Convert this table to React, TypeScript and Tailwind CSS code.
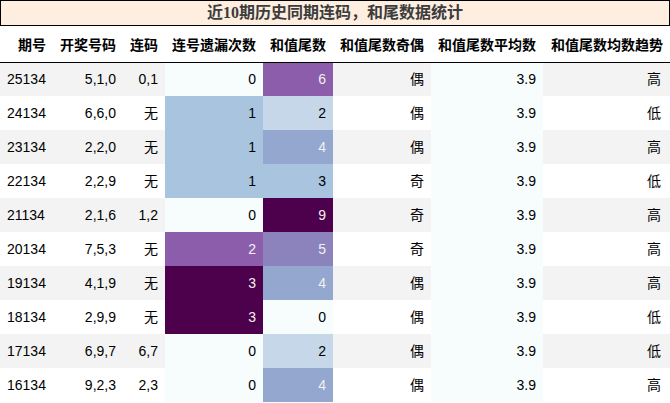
const HEAD = ["期号", "开奖号码", "连码", "连号遗漏次数", "和值尾数", "和值尾数奇偶", "和值尾数平均数", "和值尾数均数趋势"];
const WIDTHS = ["w-[53px]", "w-[70px]", "w-[42px]", "w-[98px]", "w-[70px]", "w-[98px]", "w-[112px]", "w-[127px]"];

const ROWS: [string, string, string, number, number, string, string][] = [
  ["25134", "5,1,0", "0,1", 0, 6, "偶", "高"],
  ["24134", "6,6,0", "无", 1, 2, "偶", "低"],
  ["23134", "2,2,0", "无", 1, 4, "偶", "高"],
  ["22134", "2,2,9", "无", 1, 3, "奇", "低"],
  ["21134", "2,1,6", "1,2", 0, 9, "奇", "高"],
  ["20134", "7,5,3", "无", 2, 5, "奇", "高"],
  ["19134", "4,1,9", "无", 3, 4, "偶", "高"],
  ["18134", "2,9,9", "无", 3, 0, "偶", "低"],
  ["17134", "6,9,7", "6,7", 0, 2, "偶", "低"],
  ["16134", "9,2,3", "2,3", 0, 4, "偶", "高"],
];

// BuPu gradient, pre-computed per value
const MISS: Record<number, string> = {
  0: "bg-[#f7fcfd] text-black",
  1: "bg-[#a9c4df] text-black",
  2: "bg-[#8b5daa] text-[#f1f1f1]",
  3: "bg-[#4d004b] text-[#f1f1f1]",
};
const TAIL: Record<number, string> = {
  0: "bg-[#f7fcfd] text-black",
  2: "bg-[#c5d7e9] text-black",
  3: "bg-[#a9c4df] text-black",
  4: "bg-[#94a7cf] text-[#f1f1f1]",
  5: "bg-[#8c83bc] text-[#f1f1f1]",
  6: "bg-[#8b5daa] text-[#f1f1f1]",
  9: "bg-[#4d004b] text-[#f1f1f1]",
};

export default function App() {
  return (
    <div className="w-[670px] bg-white font-['Liberation_Sans','Noto_Sans_CJK_SC',sans-serif] text-[14px] text-black">
      <div className="h-[26px] border border-black bg-[#fdeee0] text-center font-['Liberation_Serif','Noto_Sans_CJK_SC',serif] text-[16px] leading-[24px] font-bold text-[#3c3c3c]">
        近10期历史同期连码，和尾数据统计
      </div>
      <table className="w-[670px] table-fixed border-collapse">
        <colgroup>
          {WIDTHS.map((w, i) => <col key={i} className={w} />)}
        </colgroup>
        <thead>
          <tr className="h-[36px] border-b border-black">
            {HEAD.map((h) => (
              <th key={h} className="pr-[7px] pt-[3px] text-right font-bold whitespace-nowrap">{h}</th>
            ))}
          </tr>
        </thead>
        <tbody>
          {ROWS.map((r, i) => {
            const stripe = i % 2 === 0 ? "bg-[#f3f3f3]" : "bg-white";
            return (
              <tr key={r[0]} className="h-[34px]">
                <td className={`pl-[7px] text-left ${stripe}`}>{r[0]}</td>
                <td className={`pr-[7px] text-right ${stripe}`}>{r[1]}</td>
                <td className={`pr-[7px] text-right ${stripe}`}>{r[2]}</td>
                <td className={`pr-[7px] text-right ${MISS[r[3]]}`}>{r[3]}</td>
                <td className={`pr-[7px] text-right ${TAIL[r[4]]}`}>{r[4]}</td>
                <td className={`pr-[7px] text-right ${stripe}`}>{r[5]}</td>
                <td className="bg-[#f7fcfd] pr-[7px] text-right">3.9</td>
                <td className={`pr-[9px] text-right ${stripe}`}>{r[6]}</td>
              </tr>
            );
          })}
        </tbody>
      </table>
    </div>
  );
}
